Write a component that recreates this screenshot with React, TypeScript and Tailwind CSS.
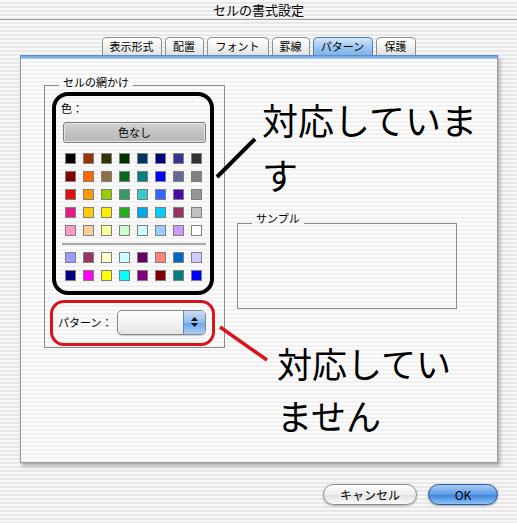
const topColors = [
  ["#000000", "#993300", "#333300", "#003300", "#003366", "#000080", "#333399", "#333333"],
  ["#800000", "#ff6600", "#8e7040", "#086a1e", "#008080", "#0000ff", "#666699", "#808080"],
  ["#e01010", "#ff9900", "#99cc00", "#339966", "#33cccc", "#3366ff", "#4a0aa8", "#969696"],
  ["#e6198a", "#ffcc00", "#ffee00", "#22b022", "#00a8e8", "#00ccff", "#993366", "#c0c0c0"],
  ["#ff99cc", "#ffcc99", "#ffff99", "#ccffcc", "#ccffff", "#99ccff", "#cc99ff", "#ffffff"],
];

const bottomColors = [
  ["#9999ff", "#993366", "#ffffcc", "#ccffff", "#660066", "#ff8080", "#0066cc", "#ccccff"],
  ["#000080", "#ff00ff", "#ffff00", "#00ffff", "#800080", "#800000", "#008080", "#0000ff"],
];

const tabs = [
  { label: "表示形式", width: "w-[60px]" },
  { label: "配置", width: "w-[39px]" },
  { label: "フォント", width: "w-[62px]" },
  { label: "罫線", width: "w-[38px]" },
  { label: "パターン", width: "w-[60px]", active: true },
  { label: "保護", width: "w-[40px]" },
];

function SwatchGrid({ rows }: { rows: string[][] }) {
  return (
    <div className="grid w-[137px] grid-cols-8 gap-[7px]">
      {rows.flat().map((c, i) => (
        <div
          key={i}
          className="h-[11px] w-[11px] border border-[#7f7f7f]"
          style={{ backgroundColor: c }}
        />
      ))}
    </div>
  );
}

export default function App() {
  return (
    <div className="relative h-[523px] w-[517px] overflow-hidden bg-[repeating-linear-gradient(to_bottom,#f7f7f7_0px,#f7f7f7_2px,#e8e8e8_2px,#e8e8e8_4px)] text-black [font-family:'Noto_Sans_CJK_JP',sans-serif]">
      {/* Title bar */}
      <div className="flex h-[20px] items-center justify-center border-b border-[#9a9a9a] text-[13px] leading-none">
        セルの書式設定
      </div>

      {/* Tabs */}
      <div className="mt-[17px] flex h-[18px] justify-center gap-[3px]">
        {tabs.map((t) => (
          <div
            key={t.label}
            className={
              t.active
                ? `${t.width} flex items-center justify-center rounded-t-[5px] border border-b-0 border-[#4f7cb6] bg-[linear-gradient(to_bottom,#d6e8fa,#9cc6f0_55%,#7db3ea)] text-[11px] leading-none`
                : `${t.width} flex items-center justify-center rounded-t-[5px] border border-b-0 border-[#8f8f8f] bg-[linear-gradient(to_bottom,#ffffff,#f1f1f1_55%,#e1e1e1)] text-[11px] leading-none`
            }
          >
            {t.label}
          </div>
        ))}
      </div>

      {/* Tab panel */}
      <div className="ml-[20px] h-[408px] w-[478px] shadow-[2px_3px_4px_rgba(0,0,0,0.3)]">
        <div className="h-[4px] border-x border-t border-[#5b8ccc] bg-[linear-gradient(to_bottom,#6c9fdc,#a9cdf1)]" />
        <div className="flex h-[404px] border-x border-b border-[#9c9c9c] bg-[repeating-linear-gradient(to_bottom,#fcfcfc_0px,#fcfcfc_2px,#f1f1f1_2px,#f1f1f1_4px)]">
          {/* Left: shading group */}
          <fieldset className="ml-[23px] mt-[16px] w-[181px] self-start border border-[#8a8a8a] pb-[1px]">
            <legend className="ml-[14px] px-[4px] pb-[6px] text-[11px] leading-[14px]">セルの網かけ</legend>

            <div className="-mt-[3px] ml-[7px] w-[162px] rounded-[16px] border-[4px] border-black pb-[10px]">
              <div className="pl-[5px] pt-[5px] text-[11px] leading-[14px]">色：</div>
              <div className="ml-[7px] mt-[7px] flex h-[21px] w-[143px] items-center justify-center rounded-[3px] border border-[#7c7c7c] bg-[linear-gradient(to_bottom,#d2d2d2,#c2c2c2_50%,#b8b8b8)] text-[11px] leading-none shadow-[inset_0_0_0_1px_#e4e4e4]">
                色なし
              </div>
              <div className="ml-[9px] mt-[10px]">
                <SwatchGrid rows={topColors} />
              </div>
              <div className="ml-[6px] mt-[7px] h-[2px] w-[144px] bg-[#a8a8a8]" />
              <div className="ml-[9px] mt-[7px]">
                <SwatchGrid rows={bottomColors} />
              </div>
            </div>

            <div className="ml-[5px] mt-[5px] flex h-[46px] w-[165px] items-center justify-between rounded-[14px] border-[3px] border-[#d9141c] pb-[2px] pl-[5px] pr-[6px]">
              <span className="text-[11px] leading-[14px]">パターン：</span>
              <div className="flex h-[25px] w-[89px] overflow-hidden rounded-[5px] border border-[#8a8a8a] bg-[linear-gradient(to_bottom,#ffffff,#f3f3f3_50%,#e4e4e4)] shadow-[0_1px_1px_rgba(0,0,0,0.2)]">
                <div className="flex-1" />
                <div className="flex w-[22px] flex-col items-center justify-center gap-[2px] border-l border-[#5f88c2] bg-[linear-gradient(to_bottom,#c8def7,#8dbcee_50%,#6aa4e6_51%,#a9cff5)]">
                  <svg width="7" height="4" viewBox="0 0 7 4">
                    <path d="M3.5 0 L7 4 L0 4 Z" fill="#111" />
                  </svg>
                  <svg width="7" height="4" viewBox="0 0 7 4">
                    <path d="M0 0 L7 0 L3.5 4 Z" fill="#111" />
                  </svg>
                </div>
              </div>
            </div>
          </fieldset>

          {/* Right: notes and sample */}
          <div className="ml-[12px] flex flex-col">
            <div className="ml-[25px] mt-[33px] w-[230px] text-[36px] leading-[55px]">対応していま す</div>

            <fieldset className="mt-[9px] w-[220px] border border-[#8a8a8a]">
              <legend className="ml-[14px] px-[4px] pb-[10px] text-[11px] leading-[14px]">サンプル</legend>
              <div className="h-[73px]" />
            </fieldset>

            <div className="ml-[40px] mt-[28px] w-[180px] text-[35px] leading-[52px]">対応していません</div>
          </div>
        </div>
      </div>

      {/* Buttons */}
      <div className="mr-[19px] mt-[21px] flex justify-end gap-[11px]">
        <div className="flex h-[21px] w-[94px] items-center justify-center rounded-full border border-[#8c8c8c] bg-[linear-gradient(to_bottom,#ffffff,#eeeeee_50%,#e0e0e0_51%,#fafafa)] text-[12px] leading-none shadow-[0_1px_2px_rgba(0,0,0,0.3)]">
          キャンセル
        </div>
        <div className="flex h-[21px] w-[70px] items-center justify-center rounded-full border border-[#2a5594] bg-[linear-gradient(to_bottom,#a9cdf5,#5c9ae6_50%,#3a7fdc_51%,#8cc4f6)] text-[12px] leading-none shadow-[0_1px_2px_rgba(0,0,0,0.35)]">
          OK
        </div>
      </div>

      {/* Callout lines */}
      <svg className="pointer-events-none absolute left-0 top-0" width="517" height="523">
        <line x1="217" y1="177" x2="255" y2="139" stroke="#000" strokeWidth="4" />
        <line x1="220" y1="327" x2="267" y2="360" stroke="#d9141c" strokeWidth="3.5" />
      </svg>
    </div>
  );
}
